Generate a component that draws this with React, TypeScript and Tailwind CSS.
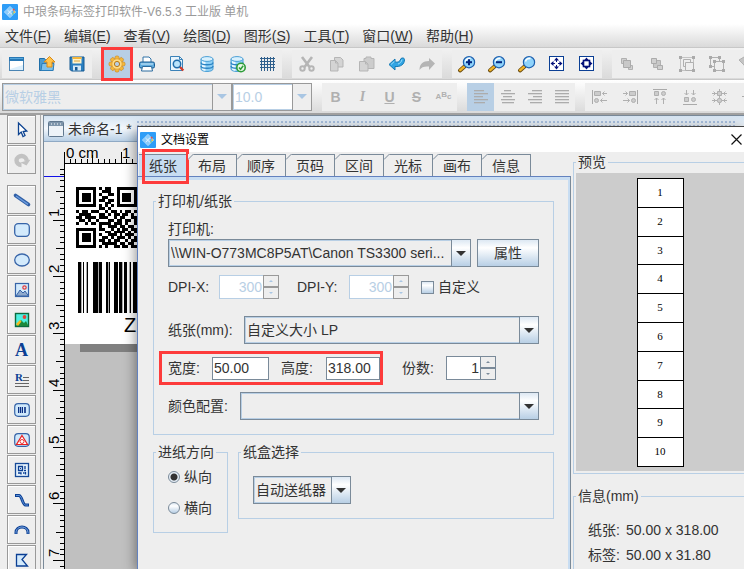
import type { ReactNode } from 'react';
import clsx from 'clsx';

const menus = [
  ['文件', 'F'],
  ['编辑', 'E'],
  ['查看', 'V'],
  ['绘图', 'D'],
  ['图形', 'S'],
  ['工具', 'T'],
  ['窗口', 'W'],
  ['帮助', 'H'],
];

const tabs = ['纸张', '布局', '顺序', '页码', '区间', '光标', '画布', '信息'];

const qrRows = [
  '111111101011001111111',
  '100000100111001000001',
  '101110101001101011101',
  '101110100110001011101',
  '101110101101101011101',
  '100000100011001000001',
  '111111101010101111111',
  '000000001101000000000',
  '101101110010110101101',
  '011110001101011011010',
  '110111101110010110011',
  '011010010001101101101',
  '100101101111011101001',
  '000000001001110110110',
  '111111101100101011011',
  '100000100011011110101',
  '101110101001110101110',
  '101110100110101110101',
  '101110101101011001011',
  '100000100111110110110',
  '111111101010011011011',
];

// [x, width] in page pixels
const bars = [
  [0, 3], [5, 1], [9, 1], [15, 5], [21, 3], [28, 2], [31, 1], [36, 4], [41, 3], [46, 3], [52, 1], [55, 5], [62, 2], [66, 3],
];
const softBars = [3, 8, 20, 30, 44, 51, 60];

const G = '#b5b5b5';

function Icon({ children, size = 20 }: { children: ReactNode; size?: number }) {
  return (
    <svg width={size} height={size} viewBox="0 0 20 20" fill="none" aria-hidden="true" className="shrink-0">
      {children}
    </svg>
  );
}

function AppLogo() {
  return (
    <svg width="16" height="16" viewBox="0 0 16 16" fill="none" aria-hidden="true" className="shrink-0">
      <rect width="16" height="16" rx="1" fill="#2e9df7" />
      <g stroke="#e8f6ff" strokeWidth="0.8" fill="#5bb6fa">
        <path d="M8 2.500l2.500 2.500L8 7.500 5.500 5z" />
        <path d="M8 8.500l2.500 2.500L8 13.500 5.500 11z" />
        <path d="M5 5.500L7.500 8 5 10.500 2.500 8z" />
        <path d="M11 5.500L13.500 8 11 10.500 8.500 8z" />
        <path d="M8 4.200v1.600M8 10.200v1.600M4.200 8h1.600M6 6.500l4 4M10 5.500l-4 4.500" />
      </g>
      <path d="M10.500 5l1.500-.5 1 1.500-1.500 1z" fill="#e2574c" />
      <path d="M11.500 7.200l2 .3-.5 1.500-1.500 0z" fill="#f5c33b" />
      <path d="M10 9.500l2 0-1 1.500z" fill="#4cb85c" />
    </svg>
  );
}

function Magnifier({ sign }: { sign?: '+' | '-' }) {
  return (
    <Icon>
      <path d="M7.500 12.500l-4.500 4" stroke="#6b4a0c" strokeWidth="4" strokeLinecap="round" />
      <path d="M7 12.800l-3.800 3.400" stroke="#f0b428" strokeWidth="2.400" strokeLinecap="round" />
      <circle cx="12" cy="8.200" r="5.600" fill="#8fd3fb" stroke="#1d5fae" strokeWidth="1.200" />
      <path d="M8.500 7.500a4 4 0 0 1 5-3" stroke="#fff" strokeWidth="1.600" />
      {sign && <path d="M9 8.200h6" stroke="#03257e" strokeWidth="2" />}
      {sign === '+' && <path d="M12 5.200v6" stroke="#03257e" strokeWidth="2" />}
    </Icon>
  );
}

function Database({ refresh = false }: { refresh?: boolean }) {
  return (
    <Icon>
      <path d="M4 5v10c0 3.300 12 3.300 12 0V5" fill="#8fd0f5" stroke="#4a9fd6" />
      <path d="M5 6.800v8.600c1 .9 2 1.100 3.500 1.300V8z" fill="#e9f7ff" />
      <ellipse cx="10" cy="5" rx="6" ry="2.400" fill="#d8f0fd" stroke="#4a9fd6" />
      <path d="M4 8.500c0 3 12 3 12 0M4 12c0 3 12 3 12 0" stroke="#2b84c4" strokeWidth="1.300" />
      {refresh && (
        <g>
          <circle cx="14" cy="13.500" r="4.200" fill="#e9f8e6" stroke="#2e9c39" strokeWidth="1.600" />
          <path d="M12 13.500l1.600 1.800 2.600-3.600" stroke="#2e9c39" strokeWidth="1.500" />
        </g>
      )}
    </Icon>
  );
}

function FitBox({ inner = false }: { inner?: boolean }) {
  return (
    <Icon>
      <rect x="2.500" y="2.500" width="14" height="14" fill="#fff" stroke="#0b3f94" />
      <path d="M9.500 3.500l2.500 3H7z M9.500 15.500l2.500-3H7z M3.500 9.500l3-2.500v5z M15.500 9.500l-3-2.500v5z" fill="#06117a" />
      {inner ? (
        <rect x="6.500" y="6.500" width="6" height="6" fill="#fff" stroke="#06117a" strokeWidth="1.600" />
      ) : (
        <path d="M9.500 6v2M9.500 11v2M6 9.500h2M11 9.500h2" stroke="#06117a" />
      )}
    </Icon>
  );
}

function TextLines({ rows }: { rows: number[][] }) {
  return (
    <Icon>
      {rows.map(([x, w], i) => (
        <rect key={i} x={x} y={3 + i * 3} width={w} height="1.300" fill="#acacac" />
      ))}
    </Icon>
  );
}

const NewIcon = (
  <Icon>
    <rect x="2.500" y="3.500" width="14" height="13" fill="#dceffc" stroke="#4a84b3" />
    <path d="M3 7h13v4L3 15z" fill="#fff" />
    <rect x="2" y="3" width="15" height="4" fill="#2878b5" />
    <path d="M3 4.500h13" stroke="#55a7dc" />
  </Icon>
);
const OpenIcon = (
  <Icon>
    <path d="M2.500 16.500v-12h5l1.500 2h7v10z" fill="#4b9bcf" stroke="#1f6ea8" />
    <path d="M4 16.500l1-7h12l-1 7z" fill="#7cc0ec" stroke="#2c7db8" />
    <path d="M12.500 2.500l5.500 5.500h-3v5h-5V8H7z" fill="#ffc34d" stroke="#d98a16" />
  </Icon>
);
const SaveIcon = (
  <Icon>
    <path d="M3 3h14v14H4.500L3 15.500z" fill="#2b7fc0" stroke="#175a93" />
    <rect x="5.500" y="3" width="9" height="6.500" fill="#fff3c9" />
    <path d="M5.500 3h9v2h-9z" fill="#f4b63c" />
    <path d="M7 7h6" stroke="#d9a441" />
    <rect x="6" y="11.500" width="8" height="5" fill="#d4e9f7" />
    <rect x="8" y="13" width="2.500" height="3.500" fill="#175a93" />
  </Icon>
);
const GearIcon = (
  <Icon>
    <g fill="#f5b93c" stroke="#c98a2a" strokeWidth="0.700">
      {[0, 45, 90, 135, 180, 225, 270, 315].map((a) => (
        <rect key={a} x="8" y="2" width="4" height="5" rx="1.500" transform={`rotate(${a} 10 10)`} />
      ))}
    </g>
    <circle cx="10" cy="10" r="5.200" fill="#ffdb80" stroke="#e0a23a" strokeWidth="0.900" />
    <circle cx="10" cy="10" r="2.600" fill="#b8cfe5" stroke="#b87918" />
  </Icon>
);
const PrinterIcon = (
  <Icon>
    <path d="M6 8V3h6l2 2v3" fill="#fff" stroke="#3274a8" />
    <rect x="2.500" y="8" width="15" height="6" rx="1.500" fill="#5fabdd" stroke="#1c5c92" />
    <path d="M4 10h12" stroke="#d5edfb" />
    <path d="M5.500 12.500h9l1 4.500h-11z" fill="#fff" stroke="#2b6a9e" />
  </Icon>
);
const PreviewIcon = (
  <Icon>
    <path d="M3.500 2.500h9l3 3v11h-12z" fill="#e8f5fd" stroke="#3b82b8" />
    <path d="M12.500 2.500v3h3" stroke="#3b82b8" />
    <path d="M12.800 12.800l3.500 3.700" stroke="#d23b2a" strokeWidth="2.400" />
    <circle cx="10" cy="10" r="3.700" fill="#b9e3fb" stroke="#1f6cab" strokeWidth="1.500" />
  </Icon>
);
const GridIcon = (
  <Icon>
    <path d="M4.500 3v14M7.500 3v14M10.500 3v14M13.500 3v14M16.500 3v14M3 4.500h15M3 7.500h15M3 10.500h15M3 13.500h15" stroke="#2f5f8c" />
  </Icon>
);
const CutIcon = (
  <Icon>
    <path d="M5 3l7.500 10M15 3L7.500 13" stroke={G} strokeWidth="2.600" />
    <circle cx="5.500" cy="14.500" r="2.200" stroke={G} strokeWidth="2" />
    <circle cx="14.500" cy="14.500" r="2.200" stroke={G} strokeWidth="2" />
  </Icon>
);
const CopyIcon = (
  <Icon>
    <path d="M7.500 3.500h6l2.500 2.500v7h-8.500z" fill="#d4d4d4" stroke={G} />
    <path d="M3.500 6.500h5l2.500 2.500v8H3.500z" fill="#d4d4d4" stroke={G} />
    <path d="M8.500 6.500v2.500H11" stroke={G} />
  </Icon>
);
const PasteIcon = (
  <Icon>
    <path d="M7 4.500h2V3h5v1.500h3v10H7z" fill="#ccc" stroke={G} />
    <path d="M2.500 7.500h6l2.500 2.500v7H2.500z" fill="#d4d4d4" stroke={G} />
    <path d="M8.500 7.500V10H11" stroke={G} />
  </Icon>
);
const UndoIcon = (
  <Icon>
    <path d="M2 10.500l6-5.500v3c3 .8 5-.5 6-3.500 1.500-1 3.500-.5 3.500 1 0 5-4 7.500-9.500 7V16z" fill="#31a5e4" stroke="#1579b4" />
    <path d="M4 10.500l3.500-3.200M15 5.500c-.5 2.500-2 4-4 4.500" stroke="#9adcfb" />
  </Icon>
);
const RedoIcon = (
  <Icon>
    <path d="M18 9.500l-6-5.500V7C6 7 2.500 10 2.500 16c2-3 5-4 9.500-3.500V16z" fill={G} />
  </Icon>
);
const ForwardIcon = (
  <Icon>
    <path d="M4.500 4.500h5v5h-5z" fill="#d0d0d0" stroke="#b0b0b0" />
    <path d="M11.500 11.500h4v4h-4z" fill="#d0d0d0" stroke="#b0b0b0" />
    <path d="M6.500 6.500h7v7h-7z" fill="#c8c8c8" stroke="#ababab" />
  </Icon>
);
const BackwardIcon = (
  <Icon>
    <path d="M6.500 6.500h7v7h-7z" fill="#c8c8c8" stroke="#b0b0b0" />
    <path d="M4.500 4.500h5v5h-5zM10.500 11.500h5v4h-5z" fill="#d0d0d0" stroke="#ababab" />
  </Icon>
);
const GroupIcon = (
  <Icon>
    <path d="M3.500 3.500h13v13h-13z" stroke="#c4c4c4" />
    <path d="M6.500 5.500h7v7h-7z" fill="#eee" stroke="#b0b0b0" />
    <path d="M8.500 8.500h8v8h-8z" fill="#eee" stroke="#b0b0b0" />
    <path d="M2 2h3v3H2zM15 2h3v3h-3zM2 15h3v3H2zM15 15h3v3h-3z" fill="#aaa" />
  </Icon>
);
const UngroupIcon = (
  <Icon>
    <path d="M3.500 3.500h9v9h-9z" stroke="#b0b0b0" />
    <path d="M7.500 7.500h9v9h-9z" fill="#eee" stroke="#b0b0b0" />
    <path d="M2 2h3v3H2zM11 2h3v3h-3zM2 11h3v3H2zM6 6h3v3H6zM15 6h3v3h-3zM6 15h3v3H6zM15 15h3v3h-3z" fill="#aaa" />
  </Icon>
);
const LockIcon = (
  <Icon>
    <path d="M2 6l5-3 3 3 4-1 3 6-3 5h-4L7 11z" fill="#c4c4c4" stroke="#b0b0b0" />
  </Icon>
);

const fileTools = [
  { name: '新建', icon: NewIcon },
  { name: '打开', icon: OpenIcon },
  { name: '保存', icon: SaveIcon },
];
const documentTools = [
  { name: '文档设置', icon: GearIcon, marked: true },
  { name: '打印', icon: PrinterIcon },
  { name: '打印预览', icon: PreviewIcon },
  { name: '数据库', icon: <Database /> },
  { name: '刷新数据库', icon: <Database refresh /> },
  { name: '网格', icon: GridIcon },
];
const editTools = [
  { name: '剪切', icon: CutIcon },
  { name: '复制', icon: CopyIcon },
  { name: '粘贴', icon: PasteIcon },
  { name: '撤销', icon: UndoIcon },
  { name: '重做', icon: RedoIcon },
];
const zoomTools = [
  { name: '放大', icon: <Magnifier sign="+" /> },
  { name: '缩小', icon: <Magnifier sign="-" /> },
  { name: '缩放', icon: <Magnifier /> },
  { name: '适合窗口', icon: <FitBox /> },
  { name: '适合对象', icon: <FitBox inner /> },
];
const orderTools = [
  { name: '上移', icon: ForwardIcon },
  { name: '下移', icon: BackwardIcon },
  { name: '组合', icon: GroupIcon },
  { name: '取消组合', icon: UngroupIcon },
  { name: '锁定', icon: LockIcon },
];

const paragraphTools = [
  { name: '左对齐', rows: [[3, 10], [3, 14], [3, 9], [3, 14], [3, 11]] },
  { name: '居中', rows: [[6, 7], [3, 14], [5, 9], [3, 14], [4, 12]] },
  { name: '右对齐', rows: [[7, 10], [3, 14], [8, 9], [3, 14], [5, 12]] },
  { name: '两端对齐', rows: [[3, 14], [3, 14], [3, 14], [3, 14], [3, 14]] },
];

const alignTools = [
  {
    name: '左边对齐',
    icon: (
      <Icon>
        <path d="M2.500 3v14" stroke="#aaa" />
        <path d="M4.500 4.500h6v4h-6z" fill="#ccc" stroke="#b0b0b0" />
        <circle cx="6.500" cy="13.500" r="2" fill="#ccc" stroke="#b0b0b0" />
        <path d="M12.500 6.500H17M10.500 13.500H17M14.500 4.500l-2 2 2 2M12.500 11.500l-2 2 2 2" stroke="#b0b0b0" />
      </Icon>
    ),
  },
  {
    name: '右边对齐',
    icon: (
      <Icon>
        <path d="M17.500 3v14" stroke="#aaa" />
        <path d="M9.500 4.500h6v4h-6z" fill="#ccc" stroke="#b0b0b0" />
        <circle cx="13.500" cy="13.500" r="2" fill="#ccc" stroke="#b0b0b0" />
        <path d="M3 6.500h4.500M3 13.500h6.500M5.500 4.500l2 2-2 2M7.500 11.500l2 2-2 2" stroke="#b0b0b0" />
      </Icon>
    ),
  },
  {
    name: '顶端对齐',
    icon: (
      <Icon>
        <path d="M3 2.500h14" stroke="#aaa" />
        <path d="M4.500 4.500h4v4h-4z" fill="#ccc" stroke="#b0b0b0" />
        <circle cx="13.500" cy="6.500" r="2" fill="#ccc" stroke="#b0b0b0" />
        <path d="M6.500 11v6M13.500 11v6M4.500 13l2-2 2 2M11.500 13l2-2 2 2" stroke="#b0b0b0" />
      </Icon>
    ),
  },
  {
    name: '底端对齐',
    icon: (
      <Icon>
        <path d="M3 17.500h14" stroke="#aaa" />
        <path d="M4.500 10.500h4v4h-4z" fill="#ccc" stroke="#b0b0b0" />
        <circle cx="13.500" cy="12.500" r="2" fill="#ccc" stroke="#b0b0b0" />
        <path d="M6.500 3v5M13.500 3v5M4.500 6l2 2 2-2M11.500 6l2 2 2-2" stroke="#b0b0b0" />
      </Icon>
    ),
  },
  {
    name: '水平居中',
    icon: (
      <Icon>
        <path d="M9.500 2v16M2 6.500h15M2 13.500h15" stroke="#b0b0b0" />
        <path d="M7.500 4.500h4v4h-4z" fill="#ccc" stroke="#b0b0b0" />
        <circle cx="9.500" cy="13.500" r="2.200" fill="#ccc" stroke="#b0b0b0" />
        <path d="M3.500 4.500l2 2-2 2M15.500 4.500l-2 2 2 2M3.500 11.500l2 2-2 2M15.500 11.500l-2 2 2 2" stroke="#b0b0b0" />
      </Icon>
    ),
  },
  {
    name: '垂直居中',
    icon: (
      <Icon>
        <path d="M2 9.500h16" stroke="#aaa" />
        <path d="M4.500 7.500h4v4h-4z" fill="#ccc" stroke="#aaa" />
      </Icon>
    ),
  },
];

const selectTools = [
  {
    name: '选择',
    icon: (
      <Icon>
        <path d="M6.500 3v11.500l2.700-2.500 1.800 4.500 2-1-1.800-4 3.600-.5z" fill="#fff" stroke="#0d4390" strokeWidth="1.300" />
      </Icon>
    ),
  },
  {
    name: '旋转',
    icon: (
      <Icon>
        <path d="M14.500 11a5 4.500 0 1 0-5 4" stroke="#c2c2c2" strokeWidth="4.400" />
        <path d="M18.500 9.500L14.500 15.500l-6-3z" fill="#c2c2c2" />
      </Icon>
    ),
  },
];

const drawTools = [
  {
    name: '直线',
    icon: (
      <Icon>
        <path d="M3.500 5.500l13 9" stroke="#2f5ea6" strokeWidth="3.600" strokeLinecap="round" />
        <path d="M4 6l12 8.300" stroke="#6b9bdc" strokeWidth="1.400" />
      </Icon>
    ),
  },
  {
    name: '矩形',
    icon: (
      <Icon>
        <rect x="2.700" y="3.700" width="14.600" height="12.600" rx="3.500" fill="#d3eafc" stroke="#3764a8" strokeWidth="1.300" />
      </Icon>
    ),
  },
  {
    name: '椭圆',
    icon: (
      <Icon>
        <ellipse cx="10" cy="10" rx="7.300" ry="6" fill="#d3eafc" stroke="#3764a8" strokeWidth="1.300" />
      </Icon>
    ),
  },
  {
    name: '矢量图',
    icon: (
      <Icon>
        <rect x="3.500" y="3.500" width="13" height="13" fill="#d3eafc" stroke="#3764a8" strokeWidth="1.200" />
        <path d="M4 16l4-6 3 3 2-2 3.500 5z" fill="#8ea9cc" stroke="#3764a8" />
        <circle cx="12.500" cy="7.500" r="1.700" stroke="#e23b3b" strokeWidth="1.200" />
      </Icon>
    ),
  },
  {
    name: '图片',
    icon: (
      <Icon>
        <rect x="3.500" y="3.500" width="13" height="13" fill="#4ff0e2" stroke="#0b6b3f" strokeWidth="1.400" />
        <path d="M4 16l5-6 3 3 2-2 2.500 5z" fill="#1b8a3c" />
        <path d="M4 14l4-4 1.500 1.500L6 16z" fill="#f6b91c" />
        <circle cx="12.500" cy="7" r="1.900" fill="#e2453b" />
      </Icon>
    ),
  },
  { name: '文本', icon: <span className="font-['Liberation_Serif',serif] text-lg leading-5 font-bold text-[#0b3f94]">A</span> },
  {
    name: '富文本',
    icon: (
      <Icon>
        <text x="3" y="11" fontSize="11" fontWeight="700" fontFamily="Liberation Serif" fill="#0b3f94">R</text>
        <path d="M11 7.500h6M11 10.500h6M3 13.500h14M3 16.500h14" stroke="#666" />
      </Icon>
    ),
  },
  {
    name: '条形码',
    icon: (
      <Icon>
        <rect x="2.700" y="3.700" width="14.600" height="12.600" rx="3.500" fill="#cfe8fb" stroke="#3764a8" strokeWidth="1.200" />
        <path d="M6.500 7v6M10.500 7v6" stroke="#0b2f84" />
        <path d="M8.500 7v6M13 7v6" stroke="#0b2f84" strokeWidth="1.600" />
      </Icon>
    ),
  },
  {
    name: '图标',
    icon: (
      <Icon>
        <rect x="2.700" y="3.700" width="14.600" height="12.600" rx="3.500" fill="#cfe8fb" stroke="#3764a8" strokeWidth="1.200" />
        <path d="M10 5.500l5.500 9h-11z" fill="#fff" stroke="#ea2020" strokeWidth="1.200" />
        <circle cx="10" cy="11.500" r="2" stroke="#ea2020" strokeWidth="0.900" />
      </Icon>
    ),
  },
  {
    name: '二维码',
    icon: (
      <Icon>
        <rect x="3.500" y="3.500" width="13" height="13" fill="#e6f3fd" stroke="#174a98" strokeWidth="1.300" />
        <path d="M6.500 6.500h4v4h-4zM13 6v3M12 10.500h2M6 13h3v1.500M11 13h1.500M13.500 12v2.500" stroke="#0b3f94" strokeWidth="1.300" />
        <path d="M8 8h1v1H8z" fill="#0b3f94" />
      </Icon>
    ),
  },
  {
    name: '曲线',
    icon: (
      <Icon>
        <path d="M3 5.500h4c3 0 3.500 9.500 6.500 9.500H17" stroke="#0b3f94" strokeWidth="3" />
        <path d="M4 5.500h3c3 0 3.500 9.500 6.500 9.500H16" stroke="#5e92d8" />
      </Icon>
    ),
  },
  {
    name: '圆弧',
    icon: (
      <Icon>
        <path d="M4 14v-1.500c0-3.500 3-5.500 6-5.500s6 2 6 5.500V14" stroke="#0b3f94" strokeWidth="3" />
        <path d="M4 13.500v-1c0-3.500 3-5.500 6-5.500s6 2 6 5.500v1" stroke="#7eaae4" />
      </Icon>
    ),
  },
  {
    name: '多边形',
    icon: (
      <Icon>
        <path d="M4.500 4.500h10l-4.500 5 5.500 6.500h-11z" fill="#d3eafc" stroke="#0b3f94" strokeWidth="1.300" />
      </Icon>
    ),
  },
];

type Tool = { name: string; icon: ReactNode; marked?: boolean };

function ToolGroup({ tools }: { tools: Tool[] }) {
  return (
    <div className="flex h-7 shrink-0 bg-[#eee]">
      {tools.map((tool) => (
        <button
          key={tool.name}
          aria-label={tool.name}
          className={clsx('relative flex w-[30px] items-center justify-center', tool.marked && 'bg-[#b8cfe5]')}
        >
          {tool.icon}
          {tool.marked && <span className="absolute -inset-x-px -inset-y-[3px] border-3 border-[#fd3b3b]" />}
        </button>
      ))}
    </div>
  );
}

function SideTools({ tools }: { tools: Tool[] }) {
  return (
    <div className="flex flex-col gap-px">
      {tools.map((tool) => (
        <button
          key={tool.name}
          aria-label={tool.name}
          className="flex size-[29px] shrink-0 items-center justify-center border border-[#999] bg-[#eee] shadow-[inset_1px_1px_0_#fff]"
        >
          {tool.icon}
        </button>
      ))}
    </div>
  );
}

type ComboProps = {
  id?: string;
  label?: string;
  value: string;
  disabled?: boolean;
  white?: boolean;
  className?: string;
};

function Combo({ id, label, value, disabled, white, className }: ComboProps) {
  return (
    <div className={clsx('relative h-7 min-w-0', className)}>
      <select
        id={id}
        aria-label={label}
        disabled={disabled}
        className={clsx(
          'block h-full w-full appearance-none truncate border pr-5 pl-[2px] opacity-100 shadow-[inset_0_0_0_1px_#b8cfe5] outline-none',
          white ? 'bg-white' : 'bg-[#eee]',
          disabled ? 'border-[#999] text-[#b8cfe5]' : 'border-[#7a8a99] text-[#333]',
        )}
      >
        <option>{value}</option>
      </select>
      <span
        className={clsx(
          'pointer-events-none absolute inset-y-0 right-0 flex w-5 items-center justify-center border',
          disabled
            ? 'border-[#999] bg-[#eee] text-[#a9c6e3]'
            : 'border-[#7a8a99] bg-linear-to-b from-[#dde8f3] via-white via-30% to-[#b8cfe5] text-[#333]',
        )}
      >
        <svg width="10" height="5" viewBox="0 0 10 5" aria-hidden="true">
          <path d="M0 0h10L5 5z" fill="currentColor" />
        </svg>
      </span>
    </div>
  );
}

function Spinner({ id, value, disabled, className }: { id: string; value: string; disabled?: boolean; className?: string }) {
  const edge = disabled ? 'border-[#999] text-[#a9c6e3]' : 'border-[#7a8a99] text-[#7a8a99]';
  return (
    <div className={clsx('flex h-6', className)}>
      <input
        id={id}
        defaultValue={value}
        disabled={disabled}
        className={clsx(
          'min-w-0 flex-1 border border-r-0 bg-white pr-px text-right outline-none',
          disabled ? 'border-[#b8cfe5] text-[#b8cfe5]' : 'border-[#7a8a99] text-[#333]',
        )}
      />
      <div className="flex w-4 shrink-0 flex-col">
        <button aria-label="增加" disabled={disabled} className={clsx('flex flex-1 items-center justify-center border', edge)}>
          <svg width="4" height="2" viewBox="0 0 4 2" aria-hidden="true"><path d="M0 2h4L2 0z" fill="currentColor" /></svg>
        </button>
        <button aria-label="减少" disabled={disabled} className={clsx('flex flex-1 items-center justify-center border', edge)}>
          <svg width="4" height="2" viewBox="0 0 4 2" aria-hidden="true"><path d="M0 0h4L2 2z" fill="currentColor" /></svg>
        </button>
      </div>
    </div>
  );
}

function Group({ title, className, children }: { title: string; className?: string; children: ReactNode }) {
  return (
    <fieldset className={clsx('min-w-0 border border-[#b8cfe5]', className)}>
      <legend className="ml-[2px] px-[2px] leading-5">{title}</legend>
      {children}
    </fieldset>
  );
}

const MM = 5.67;
const tickLength = (i: number) => (i % 10 === 0 ? 11 : i % 5 === 0 ? 8 : 4);

function TopRuler() {
  return (
    <svg width="100%" height="21" aria-hidden="true" fontFamily="Liberation Sans" fontSize="15" fill="#000">
      {Array.from({ length: 30 }, (_, i) => (
        <rect key={i} x={Math.round(i * MM)} y={21 - tickLength(i)} width="1" height={tickLength(i)} />
      ))}
      <text x="2" y="16">0 cm</text>
      <text x="58" y="16">1</text>
    </svg>
  );
}

function LeftRuler() {
  return (
    <svg width="20" height="100%" aria-hidden="true" fontFamily="Liberation Sans" fontSize="15" fill="#000">
      {Array.from({ length: 120 }, (_, i) => (
        <rect key={i} x={20 - tickLength(i)} y={Math.round(i * MM) - 1} width={tickLength(i)} height="1" />
      ))}
      {Array.from({ length: 7 }, (_, i) => (
        <text key={i} transform={`translate(15 ${Math.round((i + 1) * MM * 10) - 4}) rotate(-90)`}>{i + 1}</text>
      ))}
      <rect y="12" width="20" height="1" fill="#1010e8" />
    </svg>
  );
}

function DocumentWindow() {
  return (
    <div className="flex min-w-0 flex-1 flex-col border-t border-l border-[#7a8a99]">
      <div className="flex h-[26px] shrink-0 items-center gap-1 border-b border-[#8fa9c4] bg-linear-to-b from-[#d5e4f2] via-[#f4f8fc] to-[#b8cfe5] pl-1">
        <svg width="16" height="16" viewBox="0 0 16 16" fill="none" aria-hidden="true">
          <rect x="0.500" y="0.500" width="15" height="15" rx="1" fill="#eef3f8" stroke="#61788f" />
          <path d="M1 1h14v4H1z" fill="#7e95ab" />
          <path d="M3 3h1M6 3h1M9 3h1M12 3h1" stroke="#fff" />
        </svg>
        <span className="whitespace-nowrap">未命名-1 *</span>
        <span className="mr-2 h-[18px] flex-1 bg-[radial-gradient(#7f9fd0_0.5px,transparent_1px)] bg-size-[4px_4px]" />
      </div>
      <div className="grid min-h-0 flex-1 grid-cols-[21px_1fr] grid-rows-[22px_1fr]">
        <div />
        <div className="-ml-px border-b border-black">
          <TopRuler />
        </div>
        <div className="overflow-hidden border-r border-black">
          <LeftRuler />
        </div>
        <div className="bg-[#c0c0c0]">
          <div className="bg-white pt-[23px] pb-[7px] pl-[11px]">
            <svg width="61" height="61" viewBox="0 0 21 21" shapeRendering="crispEdges" aria-hidden="true">
              {qrRows.map((row, y) =>
                row.split('').map((cell, x) => cell === '1' && <rect key={`${x}-${y}`} x={x} y={y} width="1" height="1" />),
              )}
            </svg>
            <svg width="70" height="51" shapeRendering="crispEdges" aria-hidden="true" className="mt-[14px] ml-[2px]">
              {softBars.map((x) => (
                <rect key={x} x={x} width="1" height="51" fill="#aaa" />
              ))}
              {bars.map(([x, w]) => (
                <rect key={x} x={x} width={w} height="51" />
              ))}
            </svg>
            <div className="ml-12 text-xl leading-6 text-black">Z</div>
          </div>
          <div className="ml-[15px] h-2 bg-[#808080]" />
        </div>
      </div>
    </div>
  );
}

function PaperTab() {
  return (
    <div className="flex flex-1 flex-col border-t-3 border-r-2 border-[#c8ddf2] pt-[11px] pr-[14px] pl-[15px]">
      <Group title="打印机/纸张">
        <div className="px-[14px] pt-2 pb-[14px]">
          <label htmlFor="printer" className="block leading-5">打印机:</label>
          <div className="flex gap-[6px]">
            <Combo id="printer" value={'\\\\WIN-O773MC8P5AT\\Canon TS3300 seri...'} className="flex-1" />
            <button className="h-7 w-[62px] border border-[#7a8a99] bg-linear-to-b from-[#dde8f3] via-white via-30% to-[#b8cfe5]">
              属性
            </button>
          </div>

          <div className="mt-2 flex items-center">
            <label htmlFor="dpi-x" className="w-[51px]">DPI-X:</label>
            <Spinner id="dpi-x" value="300" disabled className="w-[60px]" />
            <label htmlFor="dpi-y" className="ml-[18px] w-[52px]">DPI-Y:</label>
            <Spinner id="dpi-y" value="300" disabled className="w-[60px]" />
            <label className="ml-3 flex items-center gap-1">
              <input
                type="checkbox"
                className="size-[13px] appearance-none border border-[#7a8a99] bg-linear-to-b from-[#dde8f3] via-white via-30% to-[#b8cfe5]"
              />
              自定义
            </label>
          </div>

          <div className="mt-[17px] flex items-center">
            <label htmlFor="paper" className="w-[76px]">纸张(mm):</label>
            <Combo id="paper" value="自定义大小 LP" className="flex-1" />
          </div>

          <div className="mt-[7px] -ml-[9px] flex items-center">
            <div className="flex h-[34px] items-center border-3 border-[#fd3b3b] pl-[6px]">
              <label htmlFor="width" className="w-11">宽度:</label>
              <input id="width" defaultValue="50.00" className="h-[23px] w-[57px] border border-[#7a8a99] bg-white px-px outline-none" />
              <label htmlFor="height" className="ml-3 w-[45px]">高度:</label>
              <input id="height" defaultValue="318.00" className="h-[23px] w-[54px] border border-[#7a8a99] bg-white px-px outline-none" />
            </div>
            <label htmlFor="copies" className="ml-[19px] w-11">份数:</label>
            <Spinner id="copies" value="1" className="w-[50px]" />
          </div>

          <div className="mt-[7px] flex items-center">
            <label htmlFor="color" className="w-[72px]">颜色配置:</label>
            <Combo id="color" value="" className="flex-1" />
          </div>
        </div>
      </Group>

      <div className="mt-[7px] flex items-start gap-[10px]">
        <Group title="进纸方向" className="w-[75px]">
          <div className="flex flex-col gap-[11px] pt-[5px] pb-[14px] pl-[14px]">
            {['纵向', '横向'].map((name, i) => (
              <label key={name} className="flex items-center gap-1 leading-5">
                <input
                  type="radio"
                  name="direction"
                  defaultChecked={i === 0}
                  className="size-3 appearance-none rounded-full border border-[#7a8a99] bg-linear-to-b from-[#dde8f3] via-white via-30% to-[#b8cfe5] checked:bg-[radial-gradient(#333_0_3px,#e6eff8_4px)]"
                />
                {name}
              </label>
            ))}
          </div>
        </Group>
        <Group title="纸盒选择" className="flex-1">
          <div className="px-[14px] py-[14px]">
            <Combo label="纸盒选择" value="自动送纸器" className="w-[98px]" />
          </div>
        </Group>
      </div>
    </div>
  );
}

function SettingsDialog() {
  return (
    <div
      role="dialog"
      aria-label="文档设置"
      className="absolute top-[126px] right-0 bottom-0 left-[137px] flex flex-col overflow-hidden border-t border-l border-t-[#444] border-l-[#6382bf] bg-[#eee] shadow-[-1px_3px_12px_rgba(0,0,0,0.45)]"
    >
      <div className="flex h-[25px] shrink-0 items-center bg-white pr-px pl-[2px]">
        <AppLogo />
        <span className="ml-[5px] text-xs text-black">文档设置</span>
        <button aria-label="关闭" className="ml-auto p-px">
          <svg width="11" height="11" viewBox="0 0 11 11" stroke="#111" strokeWidth="1.200" aria-hidden="true">
            <path d="M0.500 0.500l10 10M10.500 0.500l-10 10" />
          </svg>
        </button>
      </div>

      <div className="grid min-h-0 flex-1 grid-cols-[433px_1fr]">
        <div className="flex flex-col pt-[2px]">
          <div role="tablist" className="flex pl-px">
            {tabs.map((tab, i) => (
              <button
                key={tab}
                role="tab"
                aria-selected={i === 0}
                className={clsx(
                  'relative h-[22px] w-[49px] border-t border-r border-[#7a8a99] leading-5',
                  i === 0 && 'bg-[#c8ddf2]',
                )}
              >
                {tab}
                {i === 0 ? (
                  <span className="absolute -top-[6px] -right-[2px] -bottom-[8px] left-[3px] border-3 border-[#fd3b3b]" />
                ) : (
                  <svg width="6" height="6" viewBox="0 0 6 6" aria-hidden="true" className="absolute -top-px left-0">
                    <path d="M0 0h6L0 6z" fill="#eee" />
                    <path d="M0 5.500L5.500 0" stroke="#7a8a99" />
                  </svg>
                )}
              </button>
            ))}
          </div>
          <div className="flex flex-1 flex-col border-t border-r border-t-[#6382bf] border-r-[#7a8a99]">
            <PaperTab />
          </div>
        </div>

        <div className="flex min-w-0 flex-col pl-[2px]">
          <Group title="预览" className="border-r-0">
            <div className="pt-px pb-[2px] pl-[2px]">
              <div className="flex h-[298px] justify-center bg-[#ccc] pt-[5px]">
                <ol className="flex h-[289px] w-[47px] flex-col border border-t-0 border-black bg-white font-['Liberation_Serif',serif] text-[11px] text-black">
                  {Array.from({ length: 10 }, (_, i) => (
                    <li key={i} className="flex flex-1 items-center justify-center border-t border-black">
                      {i + 1}
                    </li>
                  ))}
                </ol>
              </div>
            </div>
          </Group>
          <Group title="信息(mm)" className="mt-3 flex-1 border-r-0 border-b-0">
            <dl className="grid grid-cols-[38px_1fr] gap-y-[5px] pt-[14px] pl-[14px] leading-5">
              <dt>纸张:</dt>
              <dd>50.00 x 318.00</dd>
              <dt>标签:</dt>
              <dd>50.00 x 31.80</dd>
            </dl>
          </Group>
        </div>
      </div>
    </div>
  );
}

export default function App() {
  return (
    <div className="relative flex h-screen flex-col overflow-hidden bg-[#eee] font-['Liberation_Sans','Noto_Sans_CJK_SC',sans-serif] text-sm text-[#333]">
      {/* Title bar */}
      <header className="flex h-6 shrink-0 items-center gap-[5px] bg-white pl-[2px] text-xs text-[#999]">
        <AppLogo />
        <h1>中琅条码标签打印软件-V6.5.3 工业版 单机</h1>
      </header>

      {/* Menu */}
      <nav className="flex h-6 shrink-0 items-center gap-[13px] border-b border-[#c8c8c8] bg-linear-to-b from-white to-[#dadada] pl-[5px]">
        {menus.map(([name, key]) => (
          <button key={key} className="whitespace-nowrap">
            {name}(<span className="underline">{key}</span>)
          </button>
        ))}
      </nav>

      {/* Main toolbar */}
      <div className="flex h-8 shrink-0 items-center gap-[10px] border-b border-[#c8c8c8] bg-linear-to-b from-[#f2f2f2] to-[#dadada] pl-[2px]">
        <ToolGroup tools={fileTools} />
        <ToolGroup tools={documentTools} />
        <ToolGroup tools={editTools} />
        <ToolGroup tools={zoomTools} />
        <ToolGroup tools={orderTools} />
      </div>

      {/* Format toolbar */}
      <div className="flex h-[35px] shrink-0 items-center gap-[10px] border-b-2 border-[#a0a0a0] bg-linear-to-b from-white to-[#dadada] pl-[2px]">
        <div className="flex shrink-0">
          <Combo label="字体" value="微软雅黑" disabled className="w-[230px]" />
          <Combo label="字号" value="10.0" disabled white className="w-20" />
        </div>
        <div className="flex h-7 shrink-0 bg-[#eee] text-[#b0b0b0]">
          <button className="w-[27px] font-bold">B</button>
          <button className="w-[27px] font-['Liberation_Serif',serif] font-bold italic">I</button>
          <button className="w-[27px] font-bold underline">U</button>
          <button className="w-[27px] font-bold line-through">S</button>
          <button className="flex w-[27px] items-center justify-center text-[8px] font-bold">
            <span>A</span>
            <span className="pb-1">B</span>
            <span>c</span>
          </button>
        </div>
        <div className="flex h-7 shrink-0 bg-[#eee]">
          {paragraphTools.map((tool, i) => (
            <button
              key={tool.name}
              aria-label={tool.name}
              className={clsx('flex w-[27px] items-center justify-center', i === 0 && 'bg-[#b8cfe5]')}
            >
              <TextLines rows={tool.rows} />
            </button>
          ))}
        </div>
        <ToolGroup tools={alignTools} />
      </div>

      <main className="flex min-h-0 flex-1">
        <aside className="mr-[2px] flex w-[41px] shrink-0 flex-col gap-[11px] overflow-hidden border-r border-[#aaa] pl-[7px]">
          <SideTools tools={selectTools} />
          <SideTools tools={drawTools} />
        </aside>
        <DocumentWindow />
      </main>

      <SettingsDialog />
    </div>
  );
}
